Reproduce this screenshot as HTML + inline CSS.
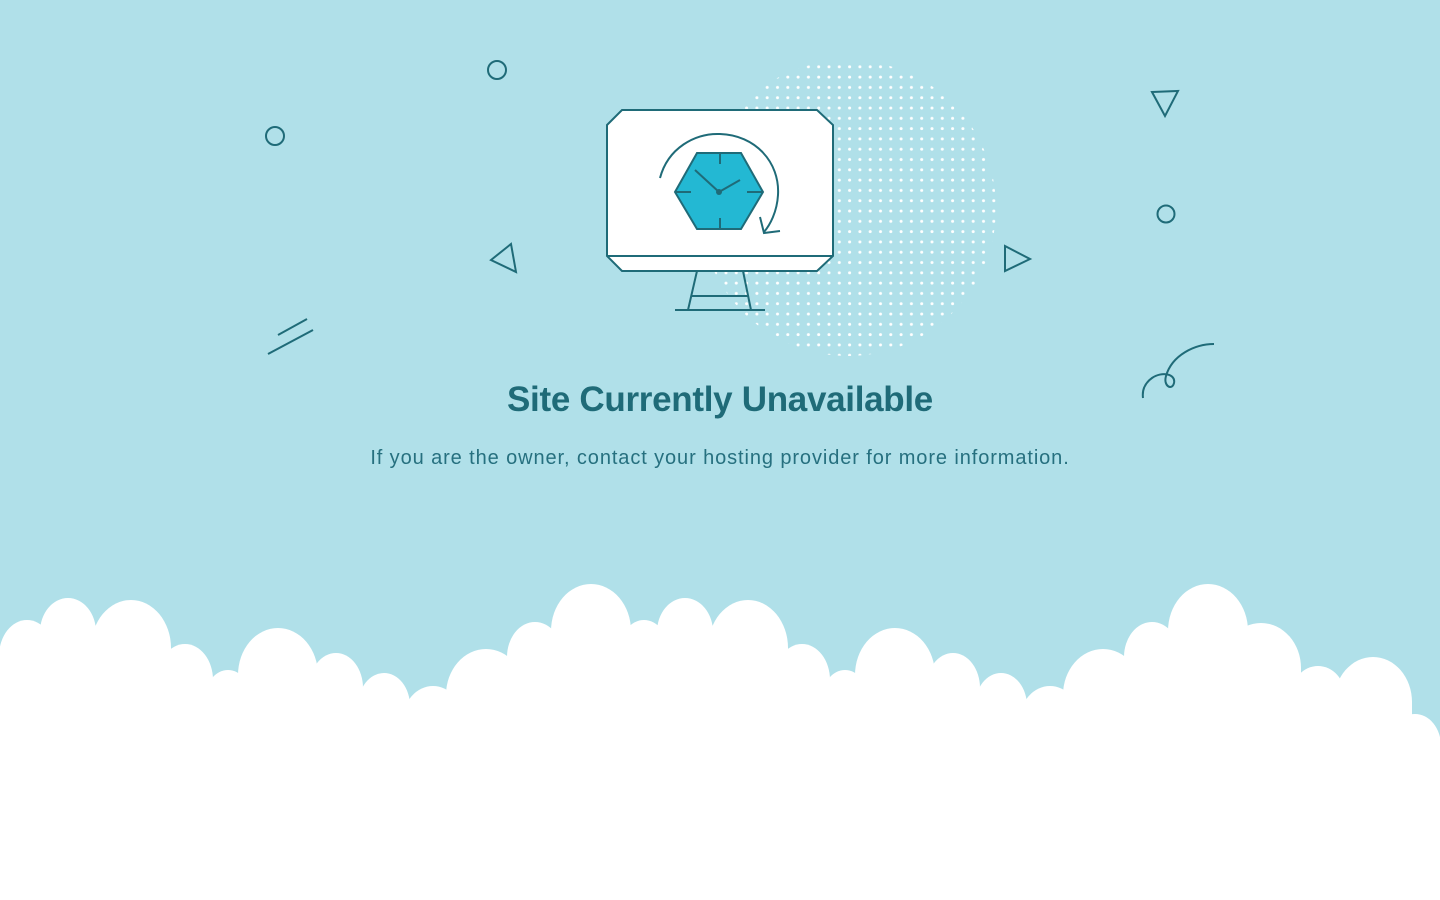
<!DOCTYPE html>
<html><head><meta charset="utf-8"><style>
html,body{margin:0;padding:0;width:1440px;height:900px;overflow:hidden;background:#b0e0e9;}
svg{position:absolute;left:0;top:0}
.t{position:absolute;left:0;width:1440px;text-align:center;color:#1f6b78;font-family:"Liberation Sans",sans-serif;}
</style></head><body>
<svg width="1440" height="900" viewBox="0 0 1440 900">
<defs>
<pattern id="dots" x="0" y="0" width="10.3" height="10.3" patternUnits="userSpaceOnUse">
<circle cx="5" cy="5" r="1.5" fill="#fff"/>
</pattern>
<clipPath id="dc"><circle cx="848" cy="208" r="148"/></clipPath>
</defs>
<rect x="690" y="55" width="320" height="310" fill="url(#dots)" clip-path="url(#dc)"/>
<g fill="none" stroke="#1f6b78" stroke-width="2" stroke-linejoin="miter">
<polygon points="607,125 622,110 817,110 833,125 833,256 817,271 622,271 607,256" fill="#fff"/>
<line x1="607" y1="256" x2="833" y2="256"/>
<line x1="697" y1="271" x2="688" y2="310"/>
<line x1="743" y1="271" x2="751" y2="310"/>
<line x1="691" y1="296" x2="748" y2="296"/>
<line x1="675" y1="310" x2="765" y2="310"/>
<polygon points="697,153 741,153 763,192 741,229 697,229 675,192" fill="#23b8d3"/>
<line x1="720" y1="153" x2="720" y2="164"/>
<line x1="720" y1="218" x2="720" y2="229"/>
<line x1="676" y1="192" x2="691" y2="192"/>
<line x1="747" y1="192" x2="763" y2="192"/>
<line x1="719" y1="192" x2="695" y2="170"/>
<line x1="719" y1="192" x2="740" y2="180"/>
<path d="M660,178 C668,148 695,133 720,134 C755,135 780,162 778,195 C777,212 770,225 764,232"/>
<polyline points="760,217 764,233 780,231"/>
<circle cx="497" cy="70" r="9"/>
<circle cx="275" cy="136" r="9"/>
<circle cx="1166" cy="214" r="8.5"/>
<polygon points="491,260 511,244 516,272"/>
<polygon points="1005,246 1030,259 1005,271"/>
<polygon points="1152,92 1178,91 1165,116"/>
<line x1="278" y1="335" x2="307" y2="319"/>
<line x1="268" y1="354" x2="313" y2="330"/>
<path d="M1214,344 C1195,344 1172,355 1166,376 C1163,386 1172,391 1174,383 C1176,374 1162,371 1152,378 C1145,383 1142,390 1143,398"/>
</g>
<circle cx="719" cy="192" r="3" fill="#1f6b78"/>
<g fill="#fff">
<ellipse cx="27" cy="656" rx="28" ry="36"/><rect x="-1" y="656" width="56" height="250"/>
<ellipse cx="68" cy="632" rx="28" ry="34"/><rect x="40" y="632" width="56" height="270"/>
<ellipse cx="131" cy="648" rx="40" ry="48"/><rect x="91" y="648" width="80" height="260"/>
<ellipse cx="185" cy="680" rx="28" ry="36"/><rect x="157" y="680" width="56" height="230"/>
<ellipse cx="228" cy="696" rx="22" ry="26"/><rect x="206" y="696" width="44" height="210"/>
<ellipse cx="278" cy="675" rx="40" ry="47"/><rect x="238" y="675" width="80" height="230"/>
<ellipse cx="336" cy="688" rx="27" ry="35"/><rect x="309" y="688" width="54" height="220"/>
<ellipse cx="384" cy="706" rx="26" ry="33"/><rect x="358" y="706" width="52" height="200"/>
<ellipse cx="433" cy="720" rx="30" ry="34"/><rect x="403" y="720" width="60" height="190"/>
<ellipse cx="486" cy="695" rx="40" ry="46"/><rect x="446" y="695" width="80" height="210"/>
<ellipse cx="535" cy="657" rx="28" ry="35"/><rect x="507" y="657" width="56" height="250"/>
<ellipse cx="591" cy="631" rx="40" ry="47"/><rect x="551" y="631" width="80" height="270"/>
<ellipse cx="644" cy="650" rx="24" ry="30"/><rect x="620" y="650" width="48" height="250"/>
<ellipse cx="685" cy="632" rx="28" ry="34"/><rect x="657" y="632" width="56" height="270"/>
<ellipse cx="748" cy="648" rx="40" ry="48"/><rect x="708" y="648" width="80" height="260"/>
<ellipse cx="802" cy="680" rx="28" ry="36"/><rect x="774" y="680" width="56" height="230"/>
<ellipse cx="845" cy="696" rx="22" ry="26"/><rect x="823" y="696" width="44" height="210"/>
<ellipse cx="895" cy="675" rx="40" ry="47"/><rect x="855" y="675" width="80" height="230"/>
<ellipse cx="953" cy="688" rx="27" ry="35"/><rect x="926" y="688" width="54" height="220"/>
<ellipse cx="1001" cy="706" rx="26" ry="33"/><rect x="975" y="706" width="52" height="200"/>
<ellipse cx="1050" cy="720" rx="30" ry="34"/><rect x="1020" y="720" width="60" height="190"/>
<ellipse cx="1103" cy="695" rx="40" ry="46"/><rect x="1063" y="695" width="80" height="210"/>
<ellipse cx="1152" cy="657" rx="28" ry="35"/><rect x="1124" y="657" width="56" height="250"/>
<ellipse cx="1208" cy="631" rx="40" ry="47"/><rect x="1168" y="631" width="80" height="270"/>
<ellipse cx="1261" cy="668" rx="40" ry="45"/><rect x="1221" y="668" width="80" height="240"/>
<ellipse cx="1318" cy="696" rx="27" ry="30"/><rect x="1291" y="696" width="54" height="210"/>
<ellipse cx="1373" cy="702" rx="39" ry="45"/><rect x="1334" y="702" width="78" height="200"/>
<ellipse cx="1415" cy="746" rx="26" ry="32"/><rect x="1389" y="746" width="52" height="160"/>
</g>
</svg>
<div class="t" style="top:380px;font-size:35px;font-weight:bold;letter-spacing:-0.3px;">Site Currently Unavailable</div>
<div class="t" style="top:447px;font-size:20px;letter-spacing:0.9px;color:#26707f;">If you are the owner, contact your hosting provider for more information.</div>
</body></html>
